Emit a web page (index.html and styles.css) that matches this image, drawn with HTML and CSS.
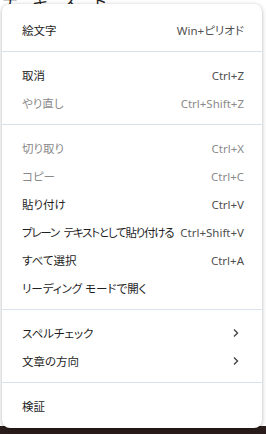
FILE: index.html
```html
<!DOCTYPE html>
<html lang="ja">

<head>
    <meta charset="UTF-8">
    <title>Context menu</title>
    <link rel="stylesheet" href="styles.css">
</head>

<body>
    <div class="page">
        <div class="page-text">テキスト</div>
        <div class="page-footer"></div>
    </div>

    <div class="menu">
        <div class="item"><span class="label">絵文字</span><span class="key">Win+ピリオド</span></div>
        <div class="sep"></div>
        <div class="item"><span class="label">取消</span><span class="key">Ctrl+Z</span></div>
        <div class="item disabled"><span class="label">やり直し</span><span class="key">Ctrl+Shift+Z</span></div>
        <div class="sep"></div>
        <div class="item disabled"><span class="label">切り取り</span><span class="key">Ctrl+X</span></div>
        <div class="item disabled"><span class="label">コピー</span><span class="key">Ctrl+C</span></div>
        <div class="item"><span class="label">貼り付け</span><span class="key">Ctrl+V</span></div>
        <div class="item"><span class="label tight">プレーン テキストとして貼り付ける</span><span class="key">Ctrl+Shift+V</span></div>
        <div class="item"><span class="label">すべて選択</span><span class="key">Ctrl+A</span></div>
        <div class="item"><span class="label">リーディング モードで開く</span></div>
        <div class="sep"></div>
        <div class="item"><span class="label">スペルチェック</span>
            <svg class="arrow" width="8" height="10" viewBox="0 0 8 10"><path d="M2 1.5 L5.5 5 L2 8.5" fill="none" stroke="#444" stroke-width="1.4"/></svg>
        </div>
        <div class="item"><span class="label">文章の方向</span>
            <svg class="arrow" width="8" height="10" viewBox="0 0 8 10"><path d="M2 1.5 L5.5 5 L2 8.5" fill="none" stroke="#444" stroke-width="1.4"/></svg>
        </div>
        <div class="sep"></div>
        <div class="item"><span class="label">検証</span></div>
    </div>
</body>

</html>
```

FILE: styles.css
```css
body {
    margin: 0;
    width: 266px;
    height: 434px;
    overflow: hidden;
    position: relative;
    background-color: #ffffff;
    font-family: "Noto Sans", "Noto Sans CJK JP", sans-serif;
}

.page {
    height: 100%;
    display: flex;
    flex-direction: column;
    justify-content: space-between;
}

.page-text {
    font-size: 16px;
    color: #222;
    margin-top: -12px;
    padding-left: 2px;
    letter-spacing: 14px;
}

.page-footer {
    height: 8px;
    background-color: #2a1c1a;
}

.menu {
    position: absolute;
    left: 2px;
    top: 4px;
    width: 260px;
    height: 424px;
    box-sizing: border-box;
    background-color: #ffffff;
    border-radius: 8px;
    box-shadow: 0 1px 4px rgba(0, 0, 0, 0.3);
    padding-top: 12px;
    display: flex;
    flex-direction: column;
    font-feature-settings: "palt";
}

.item {
    height: 28px;
    display: flex;
    align-items: center;
    justify-content: space-between;
    gap: 3px;
    padding: 0 18px 0 20px;
    font-size: 11.5px;
    color: #1f1f1f;
    white-space: nowrap;
}

.item .label,
.item .key {
    flex-shrink: 0;
}

.item .label.tight {
    letter-spacing: -1.2px;
    word-spacing: 3px;
}

.item .key {
    color: #4f4f4f;
    font-size: 11.5px;
}

.item.disabled .label,
.item.disabled .key {
    color: #8a8a8a;
}

.arrow {
    margin-right: 4px;
}

.sep {
    height: 1px;
    background-color: #d9e2ef;
    margin: 7px 0 9px;
}
```
